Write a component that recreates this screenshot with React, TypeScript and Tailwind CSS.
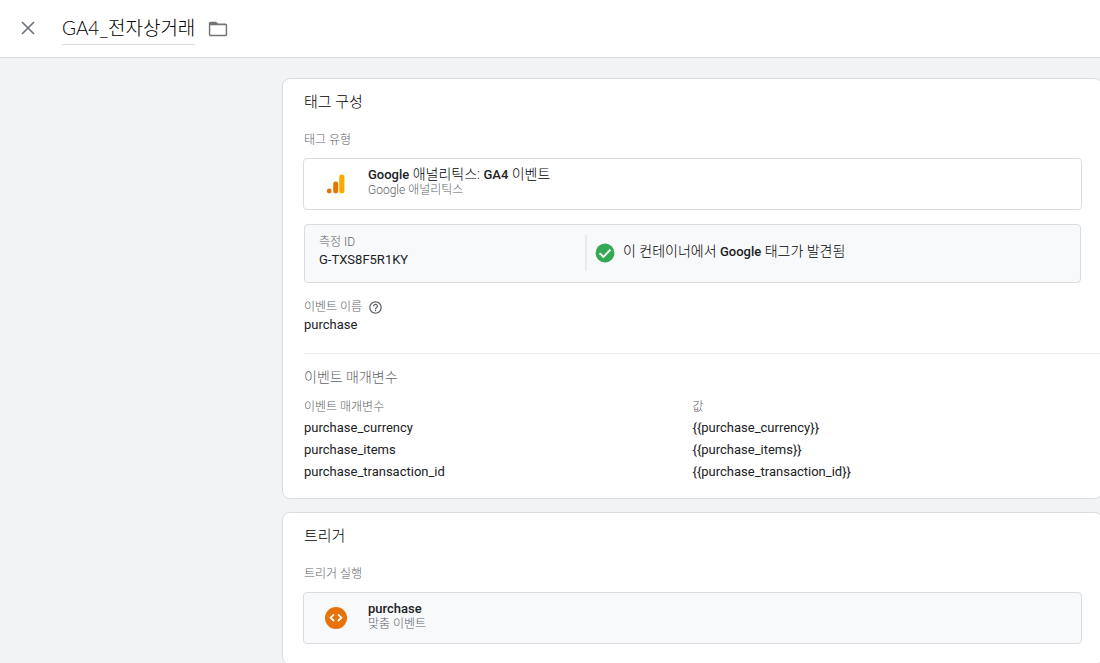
import type { ReactNode } from "react";

const parameters = [
  { name: "purchase_currency", value: "{{purchase_currency}}" },
  { name: "purchase_items", value: "{{purchase_items}}" },
  { name: "purchase_transaction_id", value: "{{purchase_transaction_id}}" },
];

function CloseIcon() {
  return (
    <svg viewBox="0 0 24 24" className="size-6" fill="none" stroke="#6b6f73" strokeWidth="1.6" aria-hidden="true">
      <path d="M6 6l12 12M18 6L6 18" />
    </svg>
  );
}

function FolderIcon() {
  return (
    <svg viewBox="0 0 24 24" className="size-[22px]" fill="#757575" aria-hidden="true">
      <path d="M20 6h-8l-2-2H4c-1.1 0-2 .9-2 2v12c0 1.1.9 2 2 2h16c1.1 0 2-.9 2-2V8c0-1.1-.9-2-2-2zm0.4 12.400H3.600V8h16.800v10.400z" />
    </svg>
  );
}

function AnalyticsIcon() {
  return (
    <svg viewBox="0 0 20 20" className="size-5" aria-hidden="true">
      <circle cx="3.2" cy="17" r="2.4" fill="#e37400" />
      <rect x="7.2" y="7.6" width="5" height="11.8" rx="2.4" fill="#e37400" />
      <rect x="13.2" y="0.4" width="5.2" height="19" rx="2.5" fill="#f9ab00" />
    </svg>
  );
}

function CustomEventIcon() {
  return (
    <svg viewBox="0 0 22 22" className="size-[22px]" aria-hidden="true">
      <circle cx="11" cy="11" r="11" fill="#e8710a" />
      <path d="M9 7.4L5.6 10.7L9 14M13 7.4l3.4 3.3L13 14" fill="none" stroke="#fff" strokeWidth="1.8" />
    </svg>
  );
}

function CheckIcon() {
  return (
    <svg viewBox="0 0 20 20" className="size-5 shrink-0" aria-hidden="true">
      <circle cx="10" cy="10" r="9.4" fill="#34a853" />
      <path d="M4.6 10.2l3.8 3.7 7-7.2" fill="none" stroke="#fff" strokeWidth="1.9" />
    </svg>
  );
}

function HelpIcon() {
  return (
    <svg viewBox="0 0 24 24" className="size-[15px]" fill="#5f6368" aria-hidden="true">
      <path d="M11 18h2v-2h-2v2zm1-16C6.48 2 2 6.48 2 12s4.48 10 10 10 10-4.48 10-10S17.52 2 12 2zm0 18c-4.41 0-8-3.59-8-8s3.59-8 8-8 8 3.59 8 8-3.59 8-8 8zm0-14c-2.21 0-4 1.79-4 4h2c0-1.1.9-2 2-2s2 .9 2 2c0 2-3 1.75-3 5h2c0-2.25 3-2.5 3-5 0-2.21-1.79-4-4-4z" />
    </svg>
  );
}

function Card({ title, children }: { title: string; children: ReactNode }) {
  return (
    <section className="rounded-lg border border-[#dadce0] bg-white px-[21px] pt-[11px] pb-[15px] last:pb-5">
      <h2 className="text-[15px] leading-6 font-light text-black">{title}</h2>
      {children}
    </section>
  );
}

function Label({ children }: { children: ReactNode }) {
  return <p className="text-xs leading-4 font-light text-[#5f6368]">{children}</p>;
}

function Latin({ children }: { children: ReactNode }) {
  return <b className="text-[13px] font-medium text-[#202124]">{children}</b>;
}

function TypeButton({ icon, title, subtitle, className }: { icon: ReactNode; title: ReactNode; subtitle: string; className: string }) {
  return (
    <div className="-mx-px mt-2.5 flex">
      <button type="button" className={`flex h-[52px] flex-1 items-center rounded border border-[#dadce0] text-left ${className}`}>
        <span className="ml-[21px] flex w-[22px] justify-center">{icon}</span>
        <span className="ml-[21px] flex flex-col pb-1.5">
          <span className="text-sm leading-4 font-light text-black">{title}</span>
          <span className="text-xs leading-[14px] font-light text-[#5f6368]">{subtitle}</span>
        </span>
      </button>
    </div>
  );
}

export default function App() {
  return (
    <div className="flex h-screen flex-col overflow-hidden bg-[#f1f3f4] font-[Roboto,'Noto_Sans_CJK_KR',sans-serif] text-[#202124]">
      <header className="flex h-[58px] shrink-0 items-center border-b border-[#dadce0] bg-white pb-0.5 pl-4">
        <button type="button" aria-label="닫기">
          <CloseIcon />
        </button>
        <h1 className="mt-[3px] ml-[22px] border-b border-[#dadce0] pb-0.5 font-[Lato,'Noto_Sans_CJK_KR',sans-serif] text-[19px] leading-7 font-light text-black">
          GA4_전자상거래
        </h1>
        <button type="button" aria-label="폴더" className="mt-0.5 ml-3">
          <FolderIcon />
        </button>
      </header>

      <main className="-mr-[3px] ml-[282px] flex flex-col gap-[13px] pt-5 font-light">
        <Card title="태그 구성">
          <div className="mt-[18px]">
            <Label>태그 유형</Label>
          </div>
          <TypeButton
            icon={<AnalyticsIcon />}
            title={
              <>
                <Latin>Google</Latin> 애널리틱스: <Latin>GA4</Latin> 이벤트
              </>
            }
            subtitle="Google 애널리틱스"
            className="bg-white"
          />

          <div className="mt-3.5 flex h-[59px] items-center rounded border border-[#dadce0] bg-[#f8f9fb] pb-0.5">
            <div className="flex h-9 w-[282px] flex-col justify-center border-r-2 border-[#e8eaed] pb-0.5 pl-3.5">
              <Label>측정 ID</Label>
              <p className="text-[13px] leading-5 font-normal">G-TXS8F5R1KY</p>
            </div>
            <div className="flex items-center gap-2 pl-2">
              <CheckIcon />
              <p className="pb-0.5 text-sm leading-5 font-light text-black">
                이 컨테이너에서 <Latin>Google</Latin> 태그가 발견됨
              </p>
            </div>
          </div>

          <div className="mt-4 flex items-center gap-1.5">
            <Label>이벤트 이름</Label>
            <button type="button" aria-label="도움말">
              <HelpIcon />
            </button>
          </div>
          <p className="text-[13px] leading-5 font-normal">purchase</p>

          <hr className="mt-[18px] -mr-[21px] border-[#e8eaed]" />

          <h3 className="mt-[13px] text-sm leading-5 text-[#5f6368]">이벤트 매개변수</h3>
          <table className="mt-2.5 w-full table-fixed text-left text-[13px]">
            <thead>
              <tr className="h-5 text-xs text-[#5f6368]">
                <th className="font-light">이벤트 매개변수</th>
                <th className="font-light">값</th>
              </tr>
            </thead>
            <tbody>
              {parameters.map((p) => (
                <tr key={p.name} className="h-[22px] font-normal">
                  <td>{p.name}</td>
                  <td>{p.value}</td>
                </tr>
              ))}
            </tbody>
          </table>
        </Card>

        <Card title="트리거">
          <div className="mt-[18px]">
            <Label>트리거 실행</Label>
          </div>
          <TypeButton
            icon={<CustomEventIcon />}
            title={<Latin>purchase</Latin>}
            subtitle="맞춤 이벤트"
            className="bg-[#f8f9fb]"
          />
        </Card>
      </main>
    </div>
  );
}
